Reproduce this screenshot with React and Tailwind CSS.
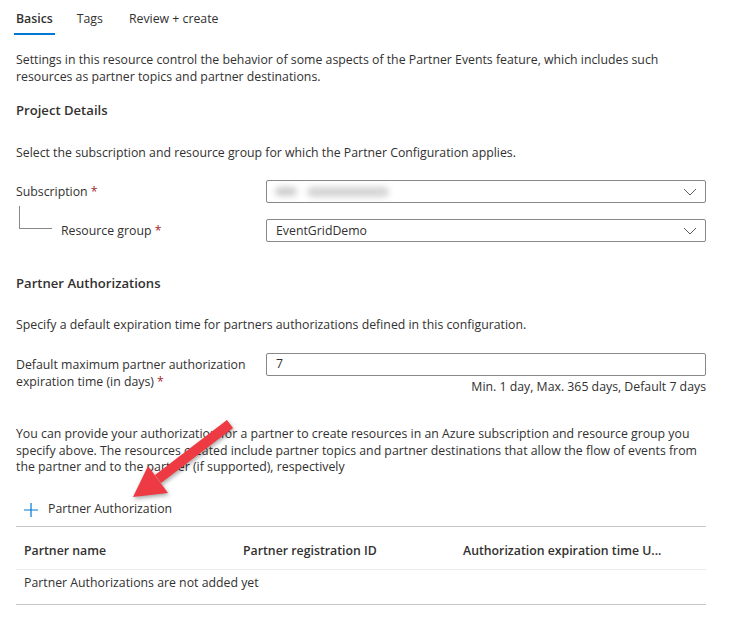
import React from "react";

function Chevron() {
  return (
    <svg width="14" height="8" viewBox="0 0 14 8" className="shrink-0">
      <path d="M1 1 L7 7 L13 1" fill="none" stroke="#605e5c" strokeWidth="1" />
    </svg>
  );
}

function Req() {
  return <span className="text-[#a4262c]">{"\u00a0*"}</span>;
}

export default function App() {
  return (
    <div
      className="relative w-[740px] h-[626px] bg-white text-[#323130] text-[12.3px] overflow-hidden"
      style={{ fontFamily: '"Open Sans", "Noto Sans", sans-serif' }}
    >
      {/* Tabs */}
      <div className="flex h-[35px] pl-[14px]">
        <div className="flex flex-col justify-between">
          <div className="h-[33px] flex items-center pt-[5px] px-[2px] font-semibold">Basics</div>
          <div className="h-[2px] bg-[#0078d4]"></div>
        </div>
        <div className="h-[33px] flex items-center pt-[5px] ml-[22px]">Tags</div>
        <div className="h-[33px] flex items-center pt-[5px] ml-[26px]">Review + create</div>
      </div>

      <div className="pl-[16px] w-[706px]">
        <p className="mt-[16px] leading-[17px] whitespace-nowrap">
          Settings in this resource control the behavior of some aspects of the Partner Events feature, which includes such
          <br />
          resources as partner topics and partner destinations.
        </p>

        <h2 className="mt-[15px] leading-[20px] text-[13.1px] font-semibold">Project Details</h2>

        <p className="mt-[24px] leading-[17px]">
          Select the subscription and resource group for which the Partner Configuration applies.
        </p>

        {/* Subscription */}
        <div className="mt-[19px] flex items-start">
          <div className="w-[250px] h-[23px] pt-[2px] flex items-center">
            <span>
              Subscription
              <Req />
            </span>
          </div>
          <div className="flex-1 h-[23px] border border-[#8a8886] rounded-[2px] flex items-center justify-between pl-[8px] pr-[8px]">
            <div className="flex items-center gap-[10px]">
              <span className="block w-[22px] h-[9px] bg-[#cdcdcd] rounded-full blur-[3px]"></span>
              <span className="block w-[82px] h-[10px] bg-[#d4d4d4] rounded-full blur-[3px]"></span>
            </div>
            <Chevron />
          </div>
        </div>

        {/* Resource group */}
        <div className="mt-[16px] flex items-start">
          <div className="w-[250px] h-[23px] pt-[2px] flex items-center relative">
            <div className="absolute left-[3px] top-[-13px] w-[33px] h-[23px] border-l border-b border-[#8a8886]"></div>
            <span className="ml-[45px]">
              Resource group
              <Req />
            </span>
          </div>
          <div className="flex-1 h-[23px] border border-[#8a8886] rounded-[2px] flex items-center justify-between pl-[9px] pr-[8px]">
            <span className="pt-[1px]">EventGridDemo</span>
            <Chevron />
          </div>
        </div>

        <h2 className="mt-[31px] leading-[20px] text-[13.1px] font-semibold">Partner Authorizations</h2>

        <p className="mt-[23px] leading-[17px]">
          Specify a default expiration time for partners authorizations defined in this configuration.
        </p>

        {/* Expiration */}
        <div className="mt-[20px] flex items-start">
          <div className="w-[250px] pt-[3px] leading-[17px]">
            Default maximum partner authorization
            <br />
            expiration time (in days)
            <Req />
          </div>
          <div className="flex-1 flex flex-col items-end">
            <div className="w-full h-[23px] border border-[#8a8886] rounded-[2px] flex items-center pl-[9px]">7</div>
            <div className="mt-[2px] leading-[17px]">Min. 1 day, Max. 365 days, Default 7 days</div>
          </div>
        </div>

        <p className="mt-[31px] leading-[16.5px] whitespace-nowrap">
          You can provide your authorization for a partner to create resources in an Azure subscription and resource group you
          <br />
          specify above. The resources created include partner topics and partner destinations that allow the flow of events from
          <br />
          the partner and to the partner (if supported), respectively
        </p>

        {/* Add button */}
        <div className="mt-[18px] h-[33px] flex items-center pl-[8px] border-b border-[#c8c6c4]">
          <svg width="14" height="14" viewBox="0 0 14 14">
            <path d="M7 0 V14 M0 7 H14" stroke="#0078d4" strokeWidth="1.2" />
          </svg>
          <span className="ml-[10px]">Partner Authorization</span>
        </div>

        {/* Table */}
        <div className="flex h-[43px] pt-[7px] items-center border-b border-[#edebe9] font-semibold">
          <div className="w-[227px] pl-[8px]">Partner name</div>
          <div className="w-[220px]">Partner registration ID</div>
          <div>Authorization expiration time U...</div>
        </div>
        <div className="flex h-[35px] pb-[7px] items-center border-b border-[#c8c6c4] pl-[8px]">
          Partner Authorizations are not added yet
        </div>
      </div>

      {/* Red arrow overlay */}
      <svg
        className="absolute left-0 top-0 pointer-events-none"
        width="740"
        height="626"
        style={{ filter: "drop-shadow(1px 2px 2px rgba(0,0,0,0.35))" }}
      >
        <line x1="230" y1="424" x2="158" y2="479" stroke="#ee3a42" strokeWidth="10" strokeLinecap="butt" />
        <polygon points="133,497 168,493 148,466" fill="#ee3a42" />
      </svg>
    </div>
  );
}
